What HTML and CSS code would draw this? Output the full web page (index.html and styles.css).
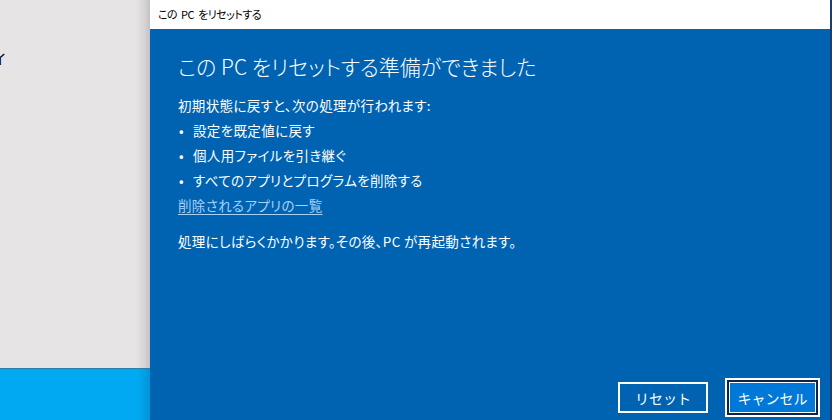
FILE: index.html
```html
<!DOCTYPE html>
<html lang="ja">
<head>
  <meta charset="UTF-8">
  <title>この PC をリセットする</title>
  <link rel="stylesheet" href="styles.css">
</head>
<body>
  <div class="screen">
    <div class="behind">
      <div class="settings">
        <span class="cut-text">イ</span>
      </div>
      <div class="taskbar"></div>
    </div>

    <div class="dialog">
      <div class="titlebar">この PC をリセットする</div>
      <div class="panel">
        <h1>この PC をリセットする準備ができました</h1>
        <p class="line">初期状態に戻すと、次の処理が行われます:</p>
        <ul class="changes">
          <li>設定を既定値に戻す</li>
          <li>個人用ファイルを引き継ぐ</li>
          <li>すべてのアプリとプログラムを削除する</li>
        </ul>
        <a class="line link" href="#">削除されるアプリの一覧</a>
        <p class="line note">処理にしばらくかかります。その後、PC が再起動されます。</p>

        <div class="actions">
          <button class="btn">リセット</button>
          <button class="btn focused">キャンセル</button>
        </div>
      </div>
    </div>
    <div class="edge"></div>
  </div>
</body>
</html>
```

FILE: styles.css
```css
html, body {
  margin: 0;
  padding: 0;
}
body {
  width: 832px;
  height: 420px;
  overflow: hidden;
  font-family: "Noto Sans CJK JP", "Noto Sans", sans-serif;
  font-feature-settings: "palt";
}
.screen {
  display: flex;
  height: 420px;
}
.behind {
  width: 150px;
  display: flex;
  flex-direction: column;
}
.settings {
  flex: 1;
  background: linear-gradient(to right, #e6e4e4 0, #e6e4e4 136px, #d6d4d4 144px, #c4c2c2 150px);
  padding-top: 49px;
  overflow: hidden;
}
.cut-text {
  display: block;
  margin-left: -7px;
  font-size: 14px;
  line-height: 18px;
  color: #000;
}
.taskbar {
  height: 51px;
  background: linear-gradient(to right, #00a9f2 0, #00a9f2 138px, #0094d8 150px);
  border-top: 1px solid #2a7fa8;
}
.dialog {
  flex: 1;
  display: flex;
  flex-direction: column;
}
.titlebar {
  height: 29px;
  background: #fff;
  color: #000;
  font-size: 11px;
  letter-spacing: -0.5px;
  word-spacing: 2px;
  line-height: 29px;
  padding-left: 8px;
}
.panel {
  flex: 1;
  background: #0063b1;
  color: #fff;
  padding: 22px 14px 0 28px;
  display: flex;
  flex-direction: column;
  align-items: flex-start;
}
h1 {
  margin: 0;
  font-size: 21px;
  font-weight: 300;
  line-height: 30px;
}
.line,
.changes {
  margin: 0;
  font-size: 13.5px;
  letter-spacing: 0.35px;
  line-height: 25px;
}
p.line:first-of-type {
  margin-top: 12px;
}
.changes {
  list-style: none;
  padding: 0;
}
.changes li::before {
  content: "•";
  display: inline-block;
  width: 15px;
  padding-left: 1px;
  box-sizing: border-box;
}
.link {
  color: #a6d2f7;
  text-decoration: underline;
  text-underline-offset: 3px;
}
.note {
  margin-top: 11px;
}
.actions {
  margin-top: auto;
  margin-bottom: 7px;
  align-self: flex-end;
  display: flex;
  gap: 21px;
}
.btn {
  width: 90px;
  height: 31px;
  background: #0063b1;
  border: 2px solid #fff;
  color: #fff;
  font-family: inherit;
  font-size: 14px;
  padding: 0;
}
.focused {
  width: 87px;
  background: #0078d7;
  border: 1px solid #fff;
  box-shadow: 0 0 0 2px #0c2350, 0 0 0 4px #fff;
}
.edge {
  width: 2px;
  background: #1c3b74;
}
```
